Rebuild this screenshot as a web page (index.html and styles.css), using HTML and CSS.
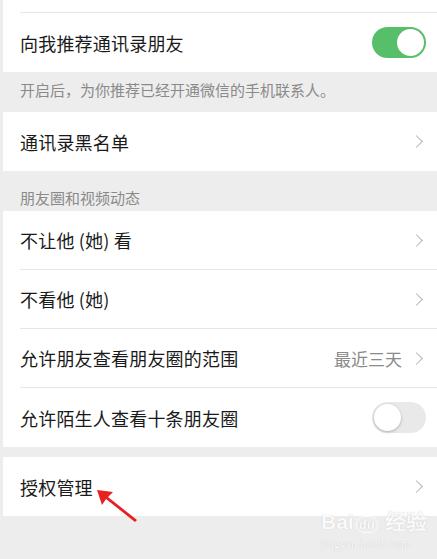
FILE: index.html
```html
<!DOCTYPE html>
<html lang="zh-CN">
<head>
<meta charset="UTF-8">
<meta name="viewport" content="width=device-width, initial-scale=1.0">
<title>朋友权限</title>
<link rel="stylesheet" href="styles.css">
</head>
<body>
<div class="page">
    <div class="group">
        <div class="stub"></div>
        <div class="row">
            <span class="label">向我推荐通讯录朋友</span>
            <span class="switch on"><span class="knob"></span></span>
        </div>
    </div>
    <div class="note">开启后，为你推荐已经开通微信的手机联系人。</div>

    <div class="group">
        <div class="row">
            <span class="label">通讯录黑名单</span>
            <span class="chev"></span>
        </div>
    </div>

    <div class="title">朋友圈和视频动态</div>
    <div class="group">
        <div class="row">
            <span class="label">不让他 (她) 看</span>
            <span class="chev"></span>
        </div>
        <div class="row">
            <span class="label">不看他 (她)</span>
            <span class="chev"></span>
        </div>
        <div class="row">
            <span class="label">允许朋友查看朋友圈的范围</span>
            <span class="value">最近三天</span>
            <span class="chev"></span>
        </div>
        <div class="row">
            <span class="label">允许陌生人查看十条朋友圈</span>
            <span class="switch"><span class="knob"></span></span>
        </div>
    </div>

    <div class="group spaced">
        <div class="row">
            <span class="label">授权管理</span>
            <span class="chev"></span>
        </div>
    </div>

    <svg class="arrow" width="50" height="36" viewBox="0 0 50 36">
        <path d="M2 2 L18 4 L13 9 L42 32 L40 34 L11 11 L7 17 Z" fill="#e8201f"/>
    </svg>
    <div class="mark">
        <div class="mark-big">Bai<span class="paw">du</span> 经验</div>
        <div class="mark-small">jingyan.baidu.com</div>
    </div>
</div>
</body>
</html>
```

FILE: styles.css
```css
body {
    margin: 0;
    padding: 0;
    background-color: #ededed;
    font-family: "Noto Sans CJK SC", "Noto Sans", sans-serif;
    color: #1a1a1a;
}

.page {
    position: relative;
    height: 559px;
    padding-left: 3px;
    overflow: hidden;
}

.group {
    background-color: #fff;
    padding-left: 17px;
}
.group.spaced {
    margin-top: 10px;
}

.stub {
    height: 12px;
    border-bottom: 1px solid #e6e6e6;
}

.row {
    display: flex;
    align-items: center;
    height: 58px;
    padding-right: 11px;
    border-bottom: 1px solid #e6e6e6;
}
.row:last-child {
    border-bottom: none;
    height: 59px;
}

.label {
    flex: 1;
    font-size: 18px;
    letter-spacing: 0.2px;
}

.value {
    font-size: 17px;
    color: #8a8a8a;
    margin-right: 10px;
}

.chev {
    width: 8px;
    height: 8px;
    border-top: 1.5px solid #b5b5b5;
    border-right: 1.5px solid #b5b5b5;
    transform: rotate(45deg);
    margin-right: 5px;
}

.switch {
    width: 54px;
    height: 31px;
    border-radius: 16px;
    background-color: #e9e9e9;
    display: flex;
    align-items: center;
    padding: 0 2px;
    box-sizing: border-box;
}
.switch .knob {
    width: 27px;
    height: 27px;
    border-radius: 50%;
    background-color: #fff;
    box-shadow: 0 1px 3px rgba(0, 0, 0, 0.25);
}
.switch.on {
    background-color: #57be6a;
    justify-content: flex-end;
}
.switch.on .knob {
    box-shadow: none;
}

.note {
    height: 40px;
    padding: 5px 0 0 17px;
    box-sizing: border-box;
    font-size: 15px;
    line-height: 26px;
    color: #8a8a8a;
}

.title {
    height: 40px;
    padding: 14px 0 0 17px;
    box-sizing: border-box;
    font-size: 15px;
    line-height: 26px;
    color: #8a8a8a;
}

.arrow {
    position: absolute;
    left: 95px;
    top: 488px;
}

.mark {
    position: absolute;
    left: 321px;
    top: 511px;
    color: #fafafa;
    text-shadow: 0 0 1px #bdbdbd;
    font-family: "Liberation Sans", sans-serif;
    line-height: 1;
}
.mark-big {
    font-size: 21px;
    font-weight: bold;
}
.mark-big .paw {
    font-size: 13px;
    border: 1.5px solid #fafafa;
    border-radius: 8px;
    padding: 0 2px;
    margin: 0 2px;
}
.mark-small {
    font-family: "Liberation Serif", serif;
    font-size: 12px;
    margin-top: 6px;
}
```
